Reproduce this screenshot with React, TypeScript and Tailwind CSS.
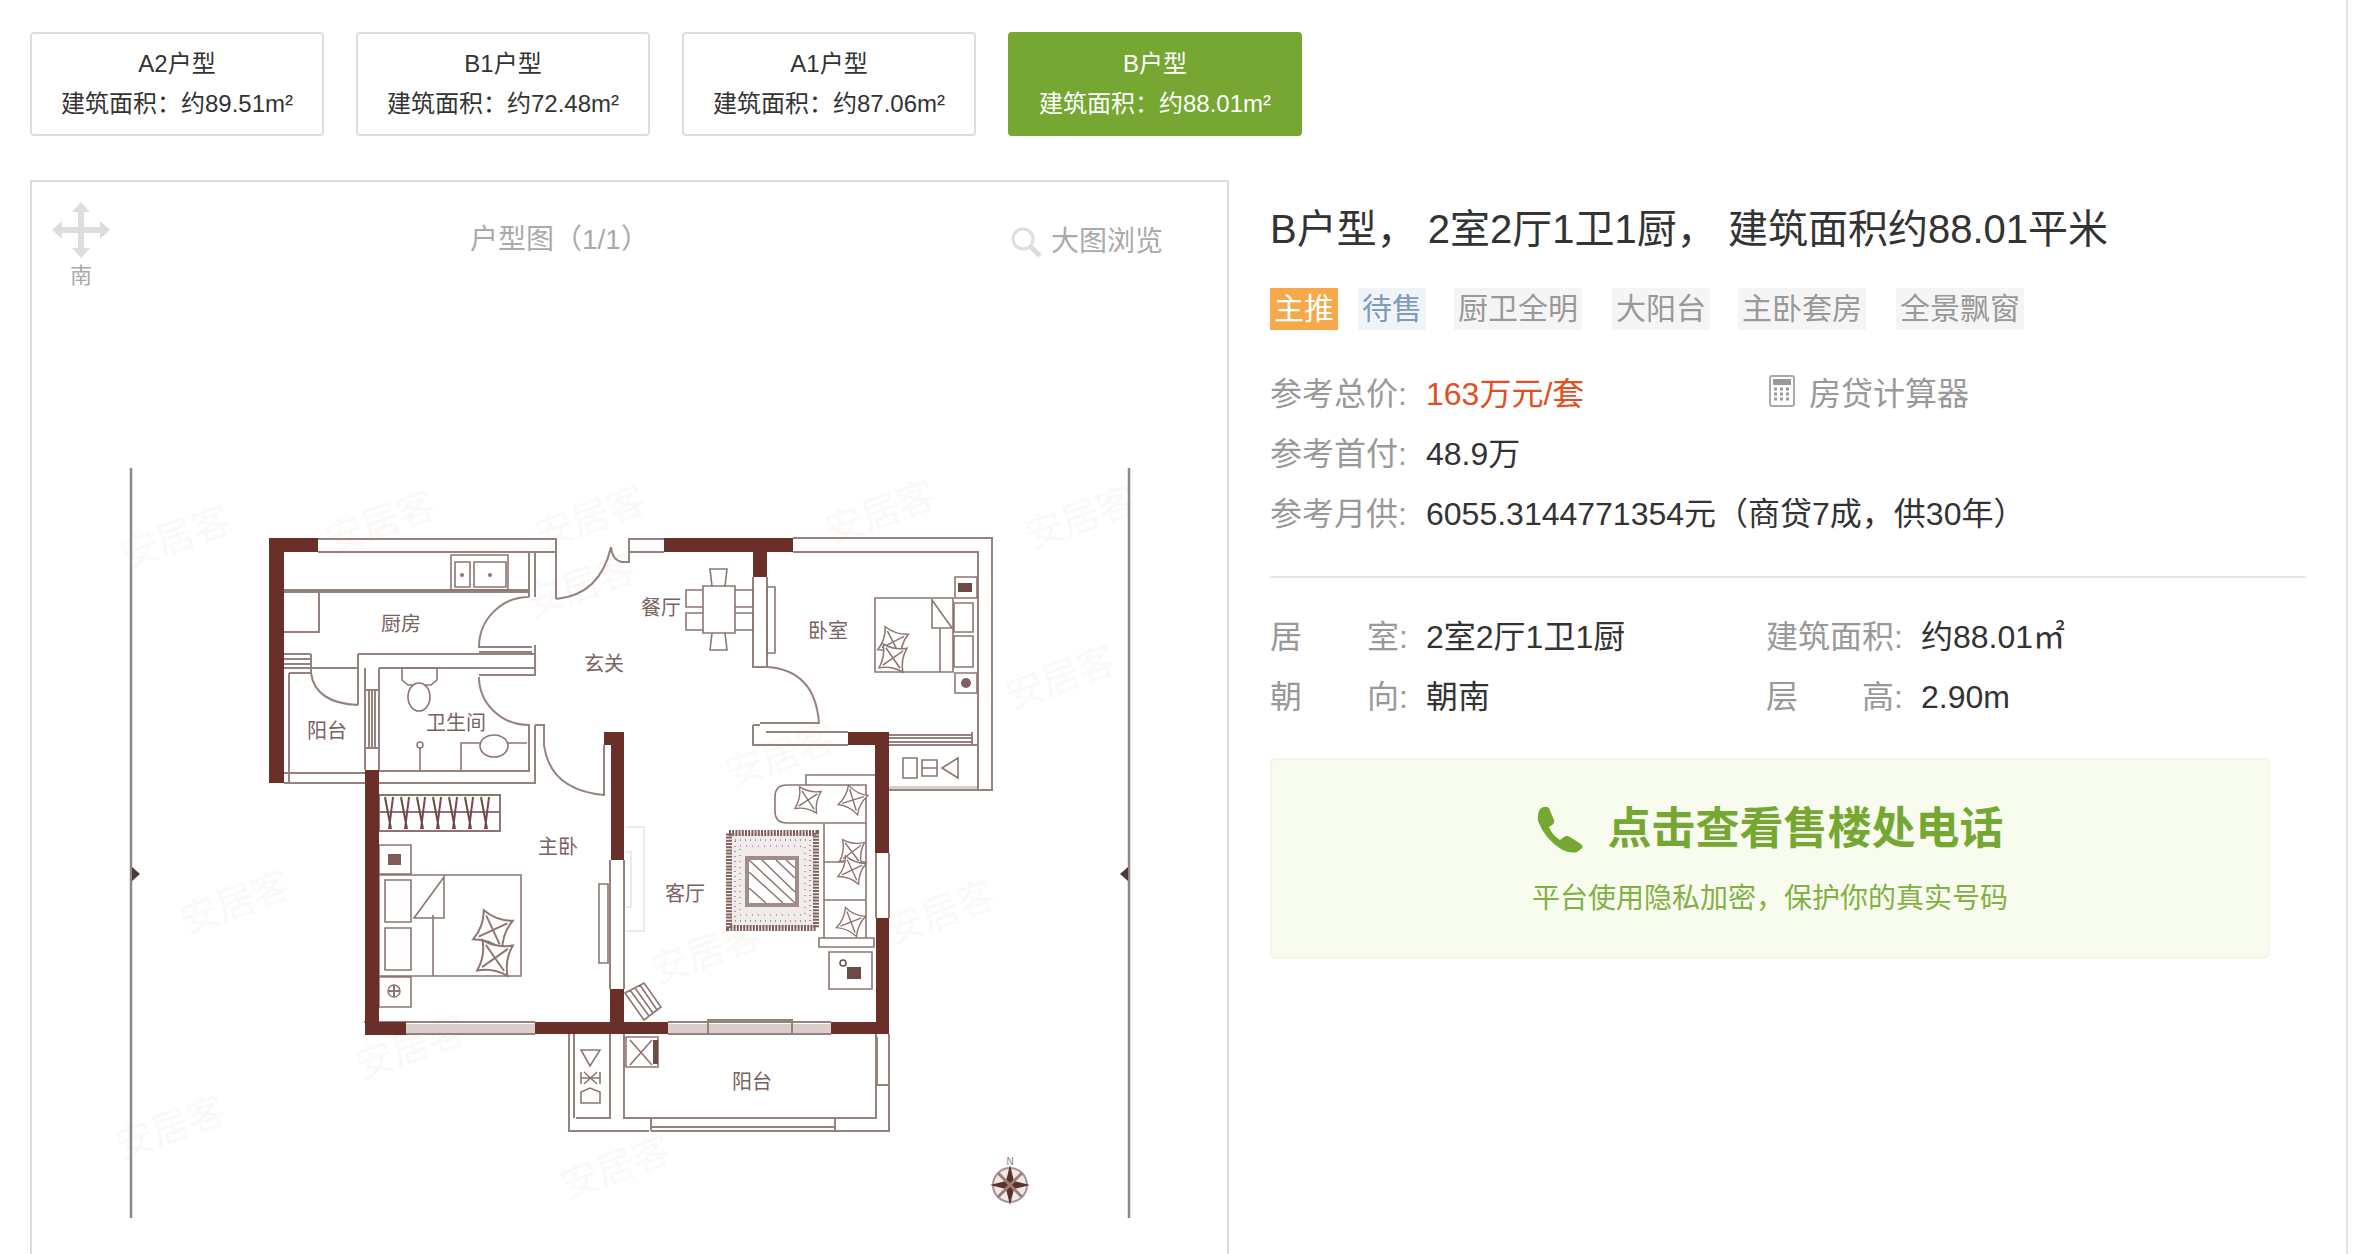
import React from "react";

const font = "font-['Liberation_Sans','Noto_Sans_CJK_SC',sans-serif]";

const units = [
  { name: "A2户型", area: "约89.51m²" },
  { name: "B1户型", area: "约72.48m²" },
  { name: "A1户型", area: "约87.06m²" },
  { name: "B户型", area: "约88.01m²", active: true },
];

const tags = [
  { text: "主推", cls: "bg-[#f5a94a] text-white mr-[20px]" },
  { text: "待售", cls: "bg-[#f0f4f9] text-[#7f9bb8] mr-[28px]" },
  { text: "厨卫全明", cls: "bg-[#f5f5f5] text-[#999] mr-[30px]" },
  { text: "大阳台", cls: "bg-[#f5f5f5] text-[#999] mr-[28px]" },
  { text: "主卧套房", cls: "bg-[#f5f5f5] text-[#999] mr-[30px]" },
  { text: "全景飘窗", cls: "bg-[#f5f5f5] text-[#999]" },
];

// solid walls, page coordinates: x, y, w, h
const walls = [
  [269, 538, 49, 14], [269, 538, 15, 245], [664, 538, 129, 14], [753, 552, 14, 25],
  [848, 732, 41, 13], [875, 732, 14, 121], [876, 918, 13, 116], [831, 1022, 58, 12],
  [604, 732, 20, 13], [611, 732, 13, 128], [610, 989, 14, 33], [535, 1022, 133, 12],
  [365, 770, 14, 264], [365, 1022, 41, 13],
];

const windows = [
  [406, 1024, 129, 9], [668, 1024, 163, 9], [889, 786, 89, 4],
];

const lines = [
  "M318 539H556V599M318 552H535V597M529 552V597M535 552H556",
  "M556 599Q600 595 611 547Q612 560 622 562H629V539H664M629 552H664",
  "M529 597A50 50 0 0 0 479 647H532M535 645V676M358 654H535M379 668H535M479 652H532M479 675H535",
  "M479 677A50 48 0 0 0 529 725V772M535 725V783M535 725H544V745Q550 790 604 795V745",
  "M379 771H529M284 783H536M284 773H365M358 654V705M284 668H358M311 654V673M284 654H311M284 659H311M284 664H311",
  "M289 673V783M289 673H311Q315 703 358 705M365 668V770M379 668V770M369 690V748M372 690V748M375 690V748M365 690H379M365 748H379",
  "M284 590H529M284 592H529M284 632H319V590",
  "M753 577V667H767V577M767 667Q815 670 819 723H760M753 725H760M753 725V745H848M766 732H848",
  "M793 538H992V790H889M793 552H978V790M889 735H972M889 738H972M889 742H972M972 732V745M889 745H978",
  "M610 860V989M624 860V989M876 853V918M889 853V918",
  "M379 1022H406M535 1022H364M406 1022H535M406 1034H535M668 1022H831M668 1034H708M792 1034H831",
  "M569 1034V1131H649M574 1034V1118M576 1118H610V1034M624 1034V1118H876V1034M651 1127H835M651 1131H835M651 1118V1131M835 1118V1131M835 1131H889V1034M877 1037V1085H889",
  "M708 1020H792V1034H708Z",
];

const detail = [
  // sink and toilet
  "M451 555H508V590H451ZM455 562H470V587H455ZM474 562H506V587H474Z",
  "M402 668H437V680L431 685H408L402 680Z",
  "M420 748V771M461 771V743H484M504 743H527",
  // master bed
  "M379 845H411V874H379ZM379 875H521V976H379ZM385 880H411V922H385ZM385 928H411V970H385ZM433 915V976M444 877L414 918H444ZM379 977H411V1007H379ZM599 884H608V963H599Z",
  // dining
  "M703 586H735V633H703ZM686 590H703V607H686ZM686 613H703V630H686ZM735 590H753V607H735ZM735 613H753V630H735ZM712 586L710 569H727L725 586ZM712 633L710 650H727L725 633Z",
  // second bedroom
  "M767 587H775V653H767ZM875 598H953V672H875ZM955 577H977V598H955ZM955 673H977V693H955ZM954 603H973V632H954ZM954 636H973V667H954ZM940 628V672M932 600L952 628H932Z",
  // sofa
  "M787 785H866V823H787Q775 823 775 811V797Q775 785 787 785ZM824 823V938H866V823M824 862H866M824 900H866M819 938H874V947H819ZM829 952H872V989H829ZM806 785V775H875",
  "M625 993L644 983L661 1007L644 1020ZM630 990L649 1016M635 988L653 1013M640 985L657 1010",
  // balcony
  "M626 1037H658V1067H626ZM630 1040L652 1065M652 1040L630 1065",
  "M581 1050H600L590 1066ZM581 1072V1084M600 1072V1084M581 1078H600M584 1072L597 1084M597 1072L584 1084M581 1103V1092L590 1088L600 1092V1103Z",
  "M903 758H917V778H903ZM922 760H937V776H922ZM922 768H937M942 768L958 758V778Z",
];

const wardrobe =
  "M385 797L391 829M393 797L389 829M401 797L407 829M409 797L405 829M417 797L423 829M425 797L421 829M433 797L439 829M441 797L437 829M449 797L455 829M457 797L453 829M465 797L471 829M473 797L469 829M481 797L487 829M489 797L485 829";

const cushions = [
  [808, 800, 12], [853, 800, 28], [852, 852, 8], [852, 870, 20], [851, 922, 24], [493, 930, 20, 1.4], [495, 958, 10, 1.4], [893, 642, 18, 1.1], [893, 658, 10, 1.1],
];

const watermarks = [
  [180, 550], [240, 915], [415, 1060], [175, 1140], [595, 530], [885, 525], [585, 598], [785, 768],
  [1065, 690], [945, 925], [710, 965], [620, 1180], [385, 535], [1085, 530],
];

const labels = [
  ["厨房", 401, 624], ["餐厅", 661, 608], ["玄关", 604, 664], ["阳台", 327, 731], ["卫生间", 456, 723],
  ["卧室", 828, 631], ["主卧", 558, 847], ["客厅", 685, 894], ["阳台", 752, 1082],
];

function FloorPlan() {
  return (
    <svg width="1060" height="790" viewBox="100 460 1060 790" className="block ml-[68px]">
      {watermarks.map(([x, y], i) => (
        <text key={i} x={x} y={y} fontSize="38" fill="#fbf8f8" textAnchor="middle" transform={`rotate(-20 ${x} ${y})`}>
          安居客
        </text>
      ))}
      <path d="M131 468V1218M1129 468V1218" stroke="#8d8786" strokeWidth="2.5" fill="none" />
      <path d="M132 867L140 874L132 881ZM1128 867L1120 874L1128 881Z" fill="#4c3a37" />

      <path d="M626 827H644V931H626M626 852H631V907H626" fill="none" stroke="#efeaea" strokeWidth="2" />

      {windows.map(([x, y, w, h], i) => (
        <rect key={i} x={x} y={y} width={w} height={h} fill="#d8cecc" />
      ))}
      <path d={lines.join("")} fill="none" stroke="#97817d" strokeWidth="2" />
      <path d={detail.join("")} fill="none" stroke="#8e7571" strokeWidth="1.6" />

      {/* wardrobe */}
      <path d="M379 795H500V831H379ZM379 812H500" fill="none" stroke="#8e7571" strokeWidth="2" />
      <path d={wardrobe} fill="none" stroke="#6e4a46" strokeWidth="2" />

      {walls.map(([x, y, w, h], i) => (
        <rect key={i} x={x} y={y} width={w} height={h} fill="#6b2f2a" />
      ))}

      {/* sink bowls, toilet, basin */}
      <circle cx="462" cy="575" r="2" fill="#8e7571" />
      <circle cx="490" cy="575" r="2" fill="#8e7571" />
      <ellipse cx="419" cy="697" rx="11" ry="14" fill="#fff" stroke="#8e7571" strokeWidth="1.6" />
      <circle cx="420" cy="745" r="3" fill="#fff" stroke="#8e7571" strokeWidth="1.5" />
      <ellipse cx="494" cy="746" rx="14" ry="11" fill="#fff" stroke="#8e7571" strokeWidth="1.6" />

      {/* rug */}
      <rect x="729" y="833" width="87" height="95" fill="#f1eceb" stroke="#7f5f5b" strokeWidth="6" strokeDasharray="2 1.2" />
      <rect x="735" y="840" width="75" height="81" fill="none" stroke="#a8948f" strokeDasharray="1 4" strokeWidth="2" />
      <rect x="740" y="846" width="65" height="69" fill="none" stroke="#b8a6a2" strokeDasharray="1 5" strokeWidth="2" />
      <rect x="747" y="858" width="50" height="47" fill="#fff" stroke="#a08c88" strokeWidth="4" />
      <path d="M749 872L783 903M749 888L766 903M749 860L795 903M762 860L795 892M776 860L795 878M786 860L795 868" stroke="#8e7571" strokeWidth="1.5" />

      {/* bedside lamps and plant */}
      <rect x="958" y="583" width="14" height="9" fill="#6e4a46" />
      <circle cx="966" cy="683" r="5" fill="#7d625e" />
      <path d="M388 991H400M394 985V997" stroke="#8e7571" strokeWidth="2" />
      <circle cx="394" cy="991" r="6" fill="none" stroke="#8e7571" strokeWidth="1.5" />
      <rect x="388" y="854" width="13" height="11" fill="#7d5b57" />
      <rect x="847" y="967" width="14" height="12" fill="#6e4a46" />
      <circle cx="843" cy="963" r="3" fill="none" stroke="#6e4a46" strokeWidth="1.5" />

      {/* washing machine tap */}
      <rect x="653" y="1040" width="5" height="24" fill="#6e4a46" />

      {cushions.map(([x, y, r, s = 1], i) => (
        <g key={i} transform={`translate(${x} ${y}) rotate(${r}) scale(${s})`} fill="#fff" stroke="#8e7571" strokeWidth="1.4">
          <path d="M-11 -11Q0 -7 11 -11Q7 0 11 11Q0 7 -11 11Q-7 0 -11 -11Z" />
          <path d="M-8 -8L8 8M8 -8L-8 8" fill="none" />
        </g>
      ))}

      {labels.map(([t, x, y], i) => (
        <text key={i} x={x} y={Number(y) + 7} fontSize="20" fill="#7a625f" textAnchor="middle">
          {t}
        </text>
      ))}

      {/* compass */}
      <text x="1010" y="1165" fontSize="10" fill="#8a7b79" textAnchor="middle">N</text>
      <circle cx="1010" cy="1185" r="17" fill="#efe8e7" stroke="#a59592" strokeWidth="2" />
      <path d="M1010 1165L1014 1181L1030 1185L1014 1189L1010 1205L1006 1189L990 1185L1006 1181Z" fill="#5c302b" />
      <path d="M998 1173L1022 1197M1022 1173L998 1197" stroke="#9a7d78" strokeWidth="3" />
    </svg>
  );
}

function Spec({ label, spread, value, width }: { label: string; spread?: string; value: React.ReactNode; width: string }) {
  return (
    <div className="flex h-[60px] leading-[60px]">
      <div className={`flex justify-between text-[#999] ${width}`}>
        <span>{label}</span>
        {spread && <span>{spread}</span>}
      </div>
      <span className="text-[#333]">{value}</span>
    </div>
  );
}

export default function App() {
  return (
    <div className={`${font} relative h-[1254px] w-[2348px] overflow-hidden border-r-2 border-[#e6e6e6] bg-white pt-[32px] pl-[30px]`}>
      <div className="flex gap-[32px]">
        {units.map((u) => (
          <div
            key={u.name}
            className={
              u.active
                ? "h-[104px] w-[294px] rounded-[4px] border-2 border-[#76a732] bg-[#76a732] pt-[10px] text-center text-[24px] leading-[40px] text-white"
                : "h-[104px] w-[294px] rounded-[4px] border-2 border-[#dddddd] bg-white pt-[10px] text-center text-[24px] leading-[40px] text-[#333]"
            }
          >
            <div>{u.name}</div>
            <div>建筑面积：{u.area}</div>
          </div>
        ))}
      </div>

      <div className="mt-[44px] flex">
        <div className="h-[1074px] w-[1199px] shrink-0 overflow-hidden border-x-2 border-t-2 border-[#dddddd]">
          <div className="flex h-[278px] items-start">
            <div className="ml-[20px] mt-[20px] flex w-[58px] flex-col items-center">
              <svg width="58" height="56" viewBox="0 0 58 56" fill="#dddddd">
                <path d="M29 0L38 10H32V25H48V19L58 28L48 37V31H32V46H38L29 56L20 46H26V31H10V37L0 28L10 19V25H26V10H20Z" />
              </svg>
              <span className="mt-[5px] text-[22px] leading-[26px] text-[#aaa]">南</span>
            </div>
            <div className="ml-[360px] mt-[38px] text-[28px] leading-[40px] text-[#aaa]">户型图（1/1）</div>
            <div className="ml-[361px] mt-[40px] flex items-center text-[28px] leading-[40px] text-[#aaa]">
              <svg width="32" height="32" viewBox="0 0 32 32" fill="none" stroke="#dddddd" className="mr-[9px]">
                <circle cx="13" cy="13" r="10" strokeWidth="3" />
                <path d="M21 21L30 30" strokeWidth="5" />
              </svg>
              大图浏览
            </div>
          </div>
          <FloorPlan />
        </div>

        <div className="ml-[41px] w-[1036px] text-[32px]">
          <div className="mt-[19px] h-[60px] text-[40px] leading-[60px] text-[#333]">
            B户型， 2室2厅1卫1厨， 建筑面积约88.01平米
          </div>
          <div className="mt-[29px] flex text-[30px]">
            {tags.map((t) => (
              <span key={t.text} className={`h-[42px] px-[4px] leading-[42px] ${t.cls}`}>
                {t.text}
              </span>
            ))}
          </div>

          <div className="mt-[34px]">
            <div className="flex">
              <div className="w-[496px]">
                <Spec label="参考总价:" width="w-[156px]" value={<span className="text-[#e0501e]">163万元/套</span>} />
              </div>
              <div className="flex h-[60px] items-center text-[#999]">
                <svg width="26" height="32" viewBox="0 0 26 32" className="ml-[3px] mr-[14px] -mt-[6px]">
                  <rect x="1" y="1" width="24" height="30" rx="2" fill="#fff" stroke="#aaa" strokeWidth="2" />
                  <rect x="4" y="4" width="18" height="6" fill="#999" />
                  <path d="M5 14H21M5 19H21M5 24H21" stroke="#999" strokeWidth="3" strokeDasharray="3 3" />
                </svg>
                房贷计算器
              </div>
            </div>
            <Spec label="参考首付:" width="w-[156px]" value="48.9万" />
            <Spec label="参考月供:" width="w-[156px]" value="6055.3144771354元（商贷7成，供30年）" />
          </div>

          <div className="mt-[32px] h-[2px] bg-[#e6e6e6]" />

          <div className="mt-[29px]">
            <div className="flex">
              <div className="w-[496px]">
                <Spec label="居" spread="室:" width="w-[156px] pr-[18px]" value="2室2厅1卫1厨" />
              </div>
              <Spec label="建筑面积:" width="w-[155px]" value="约88.01㎡" />
            </div>
            <div className="flex">
              <div className="w-[496px]">
                <Spec label="朝" spread="向:" width="w-[156px] pr-[18px]" value="朝南" />
              </div>
              <Spec label="层" spread="高:" width="w-[155px] pr-[18px]" value="2.90m" />
            </div>
          </div>

          <div className="mt-[31px] flex h-[201px] w-[1000px] flex-col items-center rounded-[6px] border-2 border-[#f2f6e8] bg-[#f8fcef] pt-[36px] text-[#76a732]">
            <div className="flex h-[66px] items-center text-[44px] font-bold leading-[66px]">
              <svg width="47" height="47" viewBox="0 0 47 47" fill="#76a732" className="mr-[24px]">
                <path d="M3 3Q8 -1 12 2L17 14Q18 17 15 19L12 21Q15 29 23 34L27 31Q30 29 33 31L44 38Q47 41 44 43L40 46Q33 48 24 43Q8 33 1 15Q0 8 3 3Z" />
              </svg>
              点击查看售楼处电话
            </div>
            <div className="mt-[17px] text-[28px] leading-[40px] text-[#82b043]">平台使用隐私加密，保护你的真实号码</div>
          </div>
        </div>
      </div>
    </div>
  );
}
